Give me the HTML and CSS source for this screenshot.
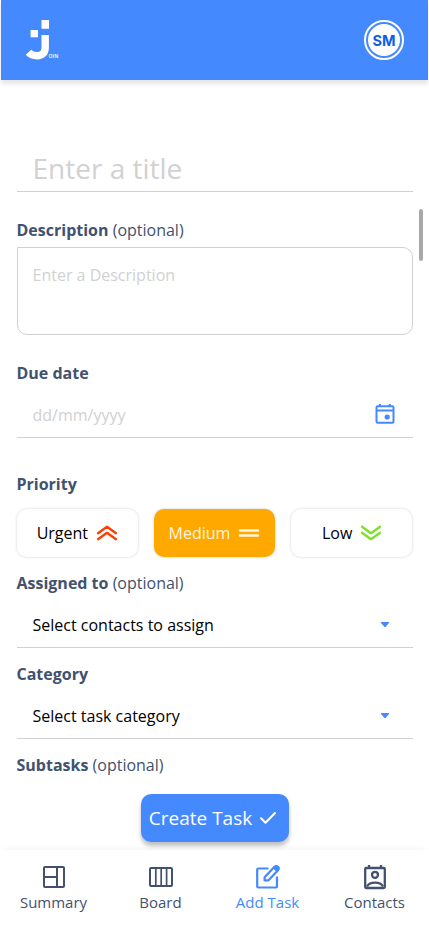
FILE: index.html
```html
<!DOCTYPE html>
<html lang="en">
<head>
<meta charset="utf-8">
<title>Join - Add Task</title>
<link rel="stylesheet" href="styles.css">
</head>
<body>
<div class="app">
  <header class="header">
    <svg class="logo" width="36" height="44" viewBox="0 0 36 44" fill="none">
      <path d="M15.500 2H23V10.700H15.500ZM4.600 12H12V19.300H4.600Z" fill="#fff"/>
      <path d="M19.200 17V29.500C19.200 35 16.300 37.700 11 37.700C7.500 37.700 4.600 36.600 2.500 34.300" stroke="#fff" stroke-width="7.400"/>
      <text class="logo-text" x="22.500" y="40.300" textLength="9.800" lengthAdjust="spacingAndGlyphs">OIN</text>
    </svg>
    <div class="avatar"><span class="avatar-inner">SM</span></div>
  </header>

  <main class="form">
    <div class="title-input">Enter a title</div>
    <div class="label description-label"><b>Description</b> (optional)</div>
    <div class="textarea">Enter a Description</div>
    <div class="label date-label"><b>Due date</b></div>
    <div class="field date-field">
      <span>dd/mm/yyyy</span>
      <svg width="20" height="22" viewBox="0 0 20 22" fill="none" stroke="#4589ff" stroke-width="2">
        <rect x="1.500" y="3.200" width="17" height="16.500" rx="1.200"/>
        <path d="M1.500 7.500H18.500M4.900 1V3.500M14.800 1V3.500"/>
        <circle cx="12.200" cy="14" r="2.600" fill="#4589ff" stroke="none"/>
      </svg>
    </div>
    <div class="label priority-label"><b>Priority</b></div>
    <div class="priorities">
      <div class="priority">Urgent
        <svg width="22" height="16" viewBox="0 0 22 16" fill="none" stroke="#ff3d00" stroke-width="2.300" stroke-linecap="round" stroke-linejoin="round"><path d="M2 8.200L11 1.800L20 8.200M2 14.200L11 7.800L20 14.200"/></svg>
      </div>
      <div class="priority medium">Medium
        <svg width="22" height="16" viewBox="0 0 22 16" fill="none" stroke="#fff5e0" stroke-width="2.500" stroke-linecap="round"><path d="M2 5.400H20M2 10.600H20"/></svg>
      </div>
      <div class="priority low">Low
        <svg width="22" height="16" viewBox="0 0 22 16" fill="none" stroke="#7ae229" stroke-width="2.300" stroke-linecap="round" stroke-linejoin="round"><path d="M2 1.800L11 8.200L20 1.800M2 7.800L11 14.200L20 7.800"/></svg>
      </div>
    </div>
    <div class="label assigned-label"><b>Assigned to</b> (optional)</div>
    <div class="field select">
      <span>Select contacts to assign</span>
      <svg width="8" height="5" viewBox="0 0 8 5"><path d="M0 0H8V1L4.500 5H3.500L0 1Z" fill="#4589ff"/></svg>
    </div>
    <div class="label category-label"><b>Category</b></div>
    <div class="field select">
      <span>Select task category</span>
      <svg width="8" height="5" viewBox="0 0 8 5"><path d="M0 0H8V1L4.500 5H3.500L0 1Z" fill="#4589ff"/></svg>
    </div>
    <div class="label subtasks-label"><b>Subtasks</b> (optional)</div>
    <div class="create">Create Task
      <svg width="18" height="14" viewBox="0 0 18 14" fill="none" stroke="#fff" stroke-width="2" stroke-linecap="round" stroke-linejoin="round"><path d="M2 7.200L6.500 11.800L16 2"/></svg>
    </div>
  </main>

  <nav class="nav">
    <div class="nav-item">
      <svg width="24" height="26" viewBox="0 0 24 26" fill="none" stroke="#42526e" stroke-width="2"><rect x="2" y="3" width="20" height="20" rx="1"/><path d="M15 3V23M2 13H15"/></svg>
      <span>Summary</span>
    </div>
    <div class="nav-item">
      <svg width="24" height="26" viewBox="0 0 24 26" fill="none" stroke="#42526e" stroke-width="2"><rect x="1" y="4" width="22" height="18" rx="1"/><path d="M6.800 4V22M12.200 4V22M17.600 4V22" stroke-width="1.700"/></svg>
      <span>Board</span>
    </div>
    <div class="nav-item active">
      <svg width="24" height="26" viewBox="0 0 24 26" fill="none" stroke="#4589ff" stroke-width="2.200"><path d="M12.500 4.500H2.200Q1.200 4.500 1.200 5.500V22.500Q1.200 23.500 2.200 23.500H20Q21 23.500 21 22.500V12.500"/><path d="M8.600 13.200L18 3.200Q20.200 1.200 22 2.800T21.800 6.600L12.300 16.400H8.600Z" stroke-linejoin="round"/><path d="M17.200 4L20.400 1.800L23 4.200L20.800 7.600Z" fill="#4589ff" stroke-width="1"/></svg>
      <span>Add Task</span>
    </div>
    <div class="nav-item">
      <svg width="24" height="26" viewBox="0 0 24 26" fill="none" stroke="#42526e" stroke-width="2.300"><rect x="2.200" y="4" width="19.600" height="20" rx="1"/><path d="M6 1V4M18 1V4"/><circle cx="12" cy="10.800" r="3"/><path d="M4 22.500C5.500 19.700 8.500 18.700 12 18.700S18.500 19.700 20 22.500"/></svg>
      <span>Contacts</span>
    </div>
  </nav>
  <div class="scrollbar"></div>
</div>
</body>
</html>
```
FILE: styles.css
```css
* { box-sizing: border-box; }
body { margin: 0; background: #fff; font-family: "Open Sans", sans-serif; font-size: 16px; color: #000; }
svg { display: block; flex: none; overflow: visible; }
.app { position: relative; width: 429px; height: 926px; padding-left: 1px; overflow: hidden; display: flex; flex-direction: column; }
.header { height: 80px; flex: none; margin-right: 1px; padding: 0 24px 0 25px; display: flex; align-items: center; justify-content: space-between; background: #4589ff; box-shadow: 0 4px 4px rgba(0,0,0,.1); }
.logo-text { font: 700 6px "Open Sans", sans-serif; fill: #e6efff; }
.avatar { width: 40px; height: 40px; padding: 2px; border: 2px solid #fff; border-radius: 50%; }
.avatar-inner { display: flex; align-items: center; justify-content: center; height: 100%; border-radius: 50%; background: #fff; color: #0d5df0; font: 700 14.5px Inter, sans-serif; }
.form { height: 770px; flex: none; padding: 66px 16.5px 0 15.5px; display: flex; flex-direction: column; }
.title-input { height: 46px; flex: none; padding-left: 16px; border-bottom: 1px solid #d1d1d1; font-size: 28px; line-height: 44px; color: #d1d1d1; }
.label { height: 24px; flex: none; line-height: 24px; color: #42526e; white-space: pre; }
.description-label { margin-top: 26px; }
.textarea { height: 88px; flex: none; margin-top: 5px; padding: 16px 15px; border: 1px solid #d1d1d1; border-radius: 0 10px 10px 10px; color: #d1d1d1; line-height: 22px; }
.date-label { margin-top: 26px; }
.field { height: 47px; flex: none; padding: 0 18px 0 16px; border-bottom: 1px solid #d1d1d1; display: flex; align-items: center; justify-content: space-between; }
.date-field { margin-top: 6px; color: #d1d1d1; }
.date-field span { padding-top: 2px; }
.priority-label { margin-top: 34px; }
.priorities { display: grid; grid-template-columns: repeat(3, 1fr); gap: 15.5px; flex: none; height: 48px; margin-top: 13px; }
.priority { display: flex; align-items: center; justify-content: center; gap: 8px; border-radius: 10px; box-shadow: 0 0 3px rgba(0,0,0,.18); }
.medium { background: #ffa800; color: #fff5e0; }
.low { padding-left: 1px; }
.assigned-label { margin-top: 14px; }
.select { height: 53px; padding: 7px 24px 0 16px; }
.category-label { margin-top: 14px; }
.subtasks-label { margin-top: 14px; }
.create { width: 148px; height: 48px; flex: none; align-self: center; margin-top: 17px; padding-right: 3px; display: flex; align-items: center; justify-content: center; gap: 7px; background: #4589ff; color: #fff; border-radius: 10px; box-shadow: 0 4px 4px rgba(0,0,0,.25); font-size: 19px; white-space: nowrap; }
.nav { height: 76px; flex: none; margin-left: -1px; display: grid; grid-template-columns: repeat(4, 107px); background: #fff; box-shadow: 0 -3px 8px -4px rgba(0,0,0,.08); }
.nav-item { display: flex; flex-direction: column; align-items: center; padding-top: 14px; color: #42526e; font-size: 15px; line-height: 22px; }
.nav-item span { margin-top: 1px; }
.nav-item.active { color: #4589ff; }
.scrollbar { position: absolute; left: 418.5px; top: 209px; width: 4.5px; height: 52px; border-radius: 3px; background: #a8a8a8; }
```
